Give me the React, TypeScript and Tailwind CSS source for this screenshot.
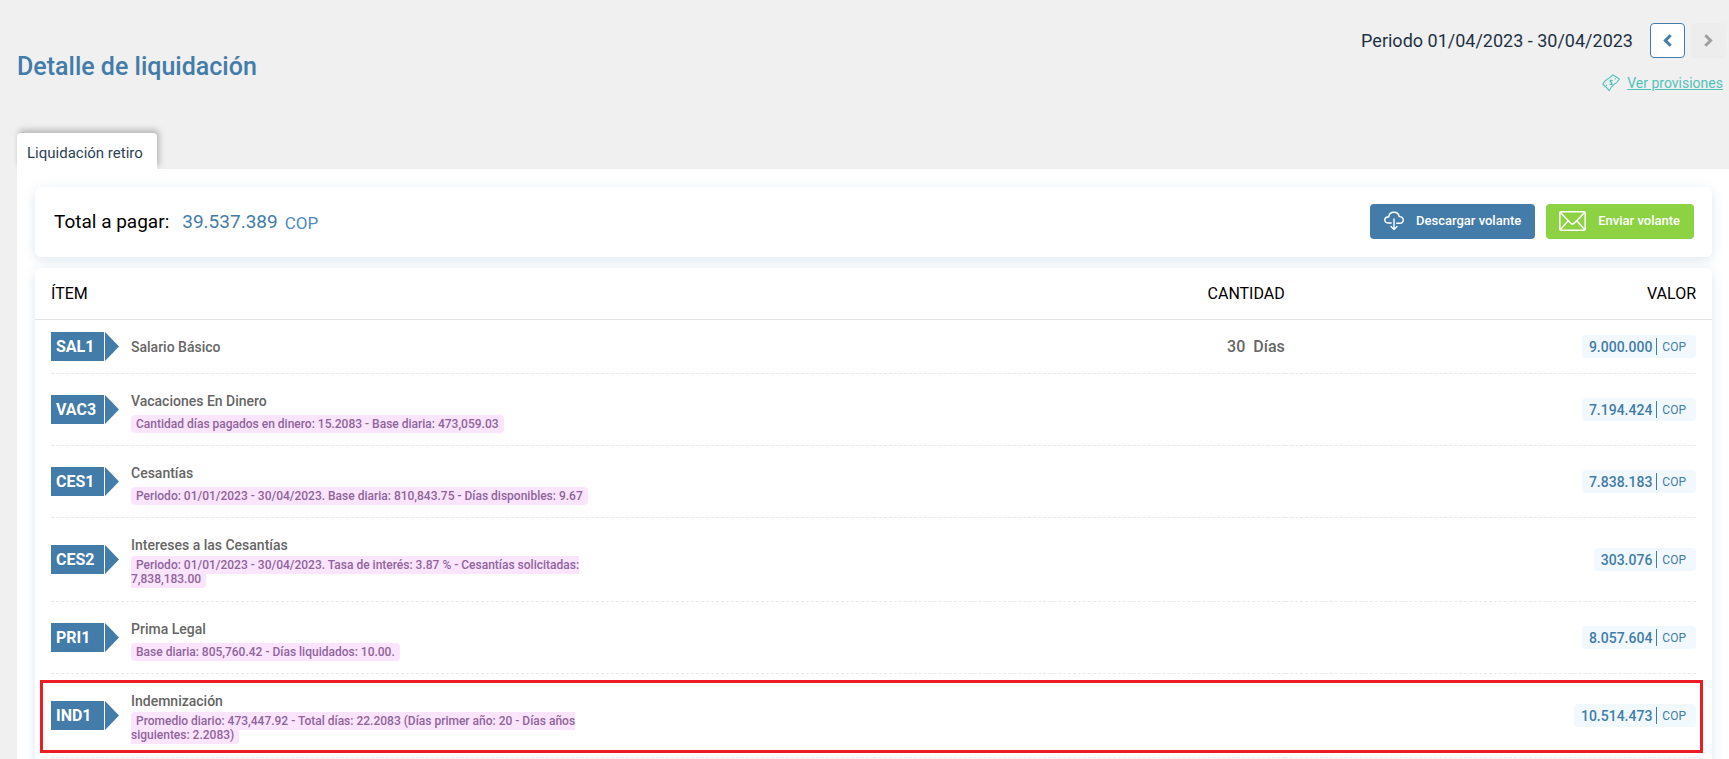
type Item = {
  code: string;
  name: string;
  detail?: string;
  multiline?: boolean;
  quantity?: [string, string];
  value: string;
  highlighted?: boolean;
};

const items: Item[] = [
  { code: "SAL1", name: "Salario Básico", quantity: ["30", "Días"], value: "9.000.000" },
  {
    code: "VAC3",
    name: "Vacaciones En Dinero",
    detail: "Cantidad días pagados en dinero: 15.2083 - Base diaria: 473,059.03",
    value: "7.194.424",
  },
  {
    code: "CES1",
    name: "Cesantías",
    detail: "Periodo: 01/01/2023 - 30/04/2023. Base diaria: 810,843.75 - Días disponibles: 9.67",
    value: "7.838.183",
  },
  {
    code: "CES2",
    name: "Intereses a las Cesantías",
    detail: "Periodo: 01/01/2023 - 30/04/2023. Tasa de interés: 3.87 % - Cesantías solicitadas: 7,838,183.00",
    multiline: true,
    value: "303.076",
  },
  {
    code: "PRI1",
    name: "Prima Legal",
    detail: "Base diaria: 805,760.42 - Días liquidados: 10.00.",
    value: "8.057.604",
  },
  {
    code: "IND1",
    name: "Indemnización",
    detail: "Promedio diario: 473,447.92 - Total días: 22.2083 (Días primer año: 20 - Días años siguientes: 2.2083)",
    multiline: true,
    value: "10.514.473",
    highlighted: true,
  },
];

function Chevron({ direction }: { direction: "left" | "right" }) {
  return (
    <svg className="h-[13px] w-[9px]" viewBox="0 0 9 13" fill="none" stroke="currentColor" strokeWidth="3" aria-hidden="true">
      <path d={direction === "left" ? "M7.700 1.300 2.400 6.500l5.300 5.200" : "M1.300 1.300 6.600 6.500l-5.300 5.200"} />
    </svg>
  );
}

function MoneyIcon() {
  return (
    <svg className="h-[18px] w-[18px]" viewBox="0 0 18 18" fill="none" stroke="currentColor" strokeWidth="1.100" strokeLinejoin="round" aria-hidden="true">
      <path d="M.8 10.200C2 7.600 3.600 6.100 5.600 5 8 3.700 9.600 2.500 10.800.9c1.800 1.300 4.300 2.300 6.500 4.300-1.400 2.500-3 3.900-5 5-2.300 1.300-4 3.400-5 6.400C5.200 13.800 3 12 .8 10.200Z" />
      <path d="M10.700 6.900c-.7-.8-2.300-.6-2.600.3-.3 1.100 2.200 1.200 2 2.500-.2 1-1.800 1.100-2.600.2M8 5.800l2.200 5.200" />
      <path d="M12.700 4.400l1 .8M4 10.900l1 .8" />
    </svg>
  );
}

function CloudDownloadIcon() {
  return (
    <svg className="h-5 w-5" viewBox="0 0 20 20" fill="none" stroke="currentColor" strokeWidth="1.400" strokeLinecap="round" strokeLinejoin="round" aria-hidden="true">
      <path d="M7.200 12H3.800A3 3 0 0 1 .8 9c0-1.700 1.200-2.900 2.900-3h1C5 3 7.200 1.200 10 1.200s4.800 1.800 5.200 4.400c2.300 0 4 1.400 4 3.300S17.700 12.200 15.600 12.200h-2.900" />
      <path d="M10 8v10.500M7 15.600l3 3 3-3" />
    </svg>
  );
}

function EnvelopeIcon() {
  return (
    <svg className="h-5 w-[27px]" viewBox="0 0 27 20" fill="none" stroke="currentColor" strokeWidth="1.500" strokeLinejoin="round" aria-hidden="true">
      <rect x=".8" y=".8" width="25.400" height="18.400" rx="1" />
      <path d="M1.200 1.200l10.800 11.200q1.500 1.300 3 0L25.800 1.200M1.200 18.800l8.200-9.200M25.800 18.800l-8.200-9.200" />
    </svg>
  );
}

function CodeTag({ code }: { code: string }) {
  return (
    <div className="flex shrink-0 items-center gap-px">
      <span className="flex h-[29px] w-[53px] items-center bg-[#437ca9] pl-[5px] text-base font-bold text-white">
        {code}
      </span>
      <span className="h-[29px] w-[14px] bg-[#437ca9] [clip-path:polygon(0_0,100%_50%,0_100%)]" />
    </div>
  );
}

function ItemRow({ item }: { item: Item }) {
  return (
    <tr className="relative border-b border-dashed border-[#e8e8e8] text-[#666]">
      <td className="p-0">
        <div className="flex items-center">
          <CodeTag code={item.code} />
          <div
            className={
              !item.detail ? "py-3 pl-3" : item.multiline ? "pt-[17px] pb-[15px] pl-3" : "pt-[17px] pb-[14px] pl-3"
            }
          >
            <p className={item.detail ? "text-sm font-medium" : "flex h-[29px] items-center text-sm font-medium"}>
              {item.name}
            </p>
            {item.detail && (
              <p className={item.multiline ? "mt-[3px] max-w-[465px] text-xs leading-[14px]" : "mt-[6px] max-w-[465px] text-xs leading-[14px]"}>
                <span className="rounded bg-[#fae4fe] px-[5px] py-0.5 font-medium text-[#8f659b]">{item.detail}</span>
              </p>
            )}
          </div>
        </div>
      </td>
      <td className="p-0 text-right text-base font-medium">
        {item.quantity && (
          <span className="inline-flex gap-2">
            <span>{item.quantity[0]}</span>
            <span>{item.quantity[1]}</span>
          </span>
        )}
      </td>
      <td className="p-0">
        <div className="flex justify-end">
          <span className="flex h-[23px] items-center rounded bg-[#f1f9ff] pr-[10px] pl-[7px] text-[#437ca9]">
            <span className="pr-1 text-sm font-medium">{item.value}</span>
            <span className="border-l border-[#437ca9] pt-px pl-[5px] text-xs leading-4">COP</span>
          </span>
        </div>
        {item.highlighted && (
          <span className="pointer-events-none absolute top-[6px] -right-[7px] bottom-[4px] -left-[11px] border-3 border-[#ed1c24]" />
        )}
      </td>
    </tr>
  );
}

export default function App() {
  return (
    <div className="h-screen overflow-hidden bg-[#f0f0f0] pl-[17px] font-['Roboto',sans-serif]">
      <header className="flex h-[133px] justify-between pr-[3px]">
        <h1 className="pt-[49px] text-[25px] leading-9 font-medium text-[#437ca9]">Detalle de liquidación</h1>
        <div className="flex flex-col items-end pt-[23px]">
          <div className="flex items-center">
            <span className="pr-[17px] text-lg text-[#1f3245]">Periodo 01/04/2023 - 30/04/2023</span>
            <button
              type="button"
              aria-label="Periodo anterior"
              className="flex size-[35px] items-center justify-center rounded border border-[#437ca9] bg-white text-[#437ca9]"
            >
              <Chevron direction="left" />
            </button>
            <button
              type="button"
              disabled
              aria-label="Periodo siguiente"
              className="ml-1.5 flex size-[35px] items-center justify-center rounded bg-[#ededed] text-[#a0a0a0]"
            >
              <Chevron direction="right" />
            </button>
          </div>
          <a href="#provisiones" className="mt-[15px] flex items-center gap-[7px] pr-[3px] text-sm text-[#52c2b8]">
            <MoneyIcon />
            <span className="underline">Ver provisiones</span>
          </a>
        </div>
      </header>

      <div role="tablist" className="flex h-9">
        <button
          type="button"
          role="tab"
          aria-selected="true"
          className="rounded-t bg-white pt-1 pr-[14px] pl-[10px] text-[15px] text-[#2c4257] shadow-[2px_-3px_6px_rgba(0,0,0,0.25)]"
        >
          Liquidación retiro
        </button>
      </div>

      <main className="relative min-h-full bg-white pt-[18px] pr-[17px] pl-[18px]">
        <section className="flex h-[70px] items-center justify-between rounded-md bg-white pr-[18px] pb-0.5 pl-[19px] shadow-[0_3px_12px_rgba(67,124,169,0.18)]">
          <div className="flex items-center pt-0.5 text-[19px] text-black">
            <span>Total a pagar:</span>
            <span className="pl-[13px] text-[#437ca9]">39.537.389</span>
            <span className="pt-[3px] pl-[7px] text-[17px] text-[#4d8cc0]">COP</span>
          </div>
          <div className="flex gap-[11px] text-[13px] font-medium text-white">
            <button type="button" className="flex h-[35px] items-center gap-3 rounded bg-[#437ca9] px-[14px]">
              <CloudDownloadIcon />
              Descargar volante
            </button>
            <button type="button" className="flex h-[35px] items-center gap-3 rounded bg-[#8dd242] pr-[14px] pl-[13px]">
              <EnvelopeIcon />
              Enviar volante
            </button>
          </div>
        </section>

        <section className="mt-[11px] rounded-md bg-white px-4 pb-10 shadow-[0_3px_12px_rgba(67,124,169,0.18)]">
          <table className="w-full table-fixed border-collapse">
            <thead>
              <tr className="relative h-[52px] text-base text-black after:absolute after:-inset-x-4 after:bottom-0 after:h-px after:bg-[#e4e4e4]">
                <th className="w-1/2 p-0 text-left font-normal">ÍTEM</th>
                <th className="w-1/4 p-0 text-right font-normal">CANTIDAD</th>
                <th className="w-1/4 p-0 text-right font-normal">VALOR</th>
              </tr>
            </thead>
            <tbody>
              {items.map((item) => (
                <ItemRow key={item.code} item={item} />
              ))}
            </tbody>
          </table>
        </section>
      </main>
    </div>
  );
}
